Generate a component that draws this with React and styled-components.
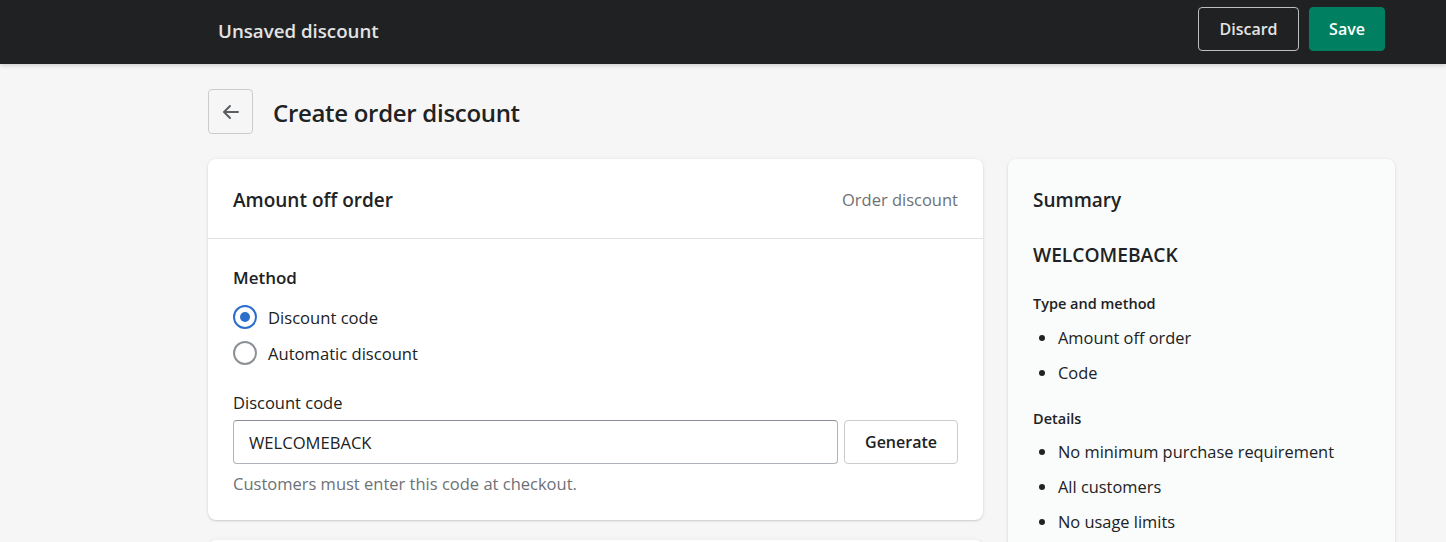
import styled, { createGlobalStyle } from "styled-components"

const GlobalStyle = createGlobalStyle`
  body {
    margin: 0;
    background: #f6f6f7;
    font-family: "Open Sans", "Noto Sans", sans-serif;
    color: #202223;
  }
  * {
    box-sizing: border-box;
  }
`

const TopBar = styled.header`
  height: 64px;
  background: #202123;
  display: flex;
  align-items: center;
  justify-content: space-between;
  padding: 0 61px 0 218px;
  box-shadow: 0 2px 4px rgba(0, 0, 0, 0.15);
`

const BarTitle = styled.div`
  color: #e3e3e3;
  font-size: 18.7px;
  font-weight: 600;
  margin-top: -4px;
`

const BarActions = styled.div`
  display: flex;
  gap: 10px;
  margin-top: -6px;
`

const BarButton = styled.button`
  width: ${(p) => p.$width}px;
  height: 44px;
  padding: 0;
  border-radius: 4px;
  font-family: inherit;
  font-size: 16px;
  font-weight: 600;
  border: 1px solid ${(p) => (p.$primary ? "#008060" : "#bbbfc3")};
  background: ${(p) => (p.$primary ? "#008060" : "transparent")};
  color: ${(p) => (p.$primary ? "#ffffff" : "#e3e3e3")};
`

const Page = styled.main`
  padding: 25px 51px 0 208px;
`

const TitleRow = styled.div`
  display: flex;
  align-items: center;
  gap: 20px;
  margin-bottom: 25px;
`

const BackButton = styled.button`
  width: 45px;
  height: 45px;
  border: 1px solid #c9cccf;
  border-radius: 4px;
  background: transparent;
  display: flex;
  align-items: center;
  justify-content: center;
  padding: 0;
`

const PageTitle = styled.h1`
  margin: 2px 0 0;
  font-size: 24px;
  font-weight: 600;
  letter-spacing: -0.3px;
`

const Layout = styled.div`
  display: grid;
  grid-template-columns: 775px 387px;
  gap: 25px;
  align-items: start;
`

const Column = styled.div`
  display: flex;
  flex-direction: column;
  gap: 20px;
`

const Card = styled.section`
  background: ${(p) => (p.$tint ? "#fafbfb" : "#ffffff")};
  border-radius: 8px;
  box-shadow: 0 0 5px rgba(23, 24, 24, 0.05), 0 1px 2px rgba(0, 0, 0, 0.15);
  min-height: ${(p) => p.$minHeight || 0}px;
`

const CardHeader = styled.div`
  height: 80px;
  padding: 2px 25px 0;
  display: flex;
  align-items: center;
  justify-content: space-between;
  border-bottom: 1px solid #e1e3e5;
`

const CardTitle = styled.h2`
  margin: 0;
  font-size: 19px;
  line-height: 26px;
  font-weight: 600;
`

const Muted = styled.span`
  color: #6d7175;
  font-size: 16.5px;
`

const CardBody = styled.div`
  padding: 28px 25px 25px;
`

const FieldLabel = styled.div`
  font-size: ${(p) => (p.$bold ? 17 : 16.5)}px;
  line-height: 22px;
  font-weight: ${(p) => (p.$bold ? 600 : 400)};
  margin-bottom: ${(p) => (p.$bold ? 16 : 6)}px;
`

const RadioGroup = styled.div`
  display: flex;
  flex-direction: column;
  gap: 12px;
  margin-bottom: 27px;
`

const RadioRow = styled.label`
  display: flex;
  align-items: center;
  gap: 11px;
  height: 24px;
  font-size: 16.6px;
`

const RadioDot = styled.span`
  width: 24px;
  height: 24px;
  border-radius: 50%;
  border: 2px solid ${(p) => (p.$checked ? "#2c6ecb" : "#8c9196")};
  display: flex;
  align-items: center;
  justify-content: center;
  &::after {
    content: "";
    width: 10px;
    height: 10px;
    border-radius: 50%;
    background: ${(p) => (p.$checked ? "#2c6ecb" : "transparent")};
  }
`

const InputRow = styled.div`
  display: flex;
  gap: 6px;
`

const TextInput = styled.div`
  flex: 1;
  height: 44px;
  border: 1px solid #aeb4b9;
  border-top-color: #898f94;
  border-radius: 4px;
  padding: 0 15px;
  display: flex;
  align-items: center;
  font-size: 16.6px;
  color: #202223;
`

const OutlineButton = styled.button`
  width: 114px;
  height: 44px;
  border: 1px solid #c9cccf;
  border-radius: 4px;
  background: #ffffff;
  font-family: inherit;
  font-size: 16px;
  font-weight: 600;
  color: #202223;
`

const HelpText = styled.div`
  margin-top: 9px;
  color: #6d7175;
  font-size: 16.5px;
  line-height: 22px;
`

const SummaryBody = styled.div`
  padding: 28px 25px 0;
`

const SummaryCode = styled.div`
  font-size: 19.2px;
  line-height: 26px;
  font-weight: 600;
  margin: 29px 0 26px;
`

const SectionLabel = styled.div`
  font-size: 14.5px;
  line-height: 20px;
  font-weight: 600;
`

const BulletList = styled.ul`
  margin: ${(p) => (p.$last ? "5px 0 20px" : "6px 0 19px")};
  padding-left: 25px;
  list-style: disc;
  li {
    font-size: 16.4px;
    line-height: 35px;
  }
`

const ArrowLeft = () => (
  <svg width="20" height="20" viewBox="0 0 20 20" fill="none">
    <path
      d="M17 10H3.5M9 4l-6 6 6 6"
      stroke="#5c5f62"
      strokeWidth="2"
      strokeLinecap="round"
      strokeLinejoin="round"
    />
  </svg>
)

const App = () => {
  return (
    <>
      <GlobalStyle />
      <TopBar>
        <BarTitle>Unsaved discount</BarTitle>
        <BarActions>
          <BarButton $width={101}>Discard</BarButton>
          <BarButton $width={76} $primary>
            Save
          </BarButton>
        </BarActions>
      </TopBar>
      <Page>
        <TitleRow>
          <BackButton aria-label="Back">
            <ArrowLeft />
          </BackButton>
          <PageTitle>Create order discount</PageTitle>
        </TitleRow>
        <Layout>
          <Column>
            <Card>
              <CardHeader>
                <CardTitle>Amount off order</CardTitle>
                <Muted>Order discount</Muted>
              </CardHeader>
              <CardBody>
                <FieldLabel $bold>Method</FieldLabel>
                <RadioGroup>
                  <RadioRow>
                    <RadioDot $checked />
                    Discount code
                  </RadioRow>
                  <RadioRow>
                    <RadioDot />
                    Automatic discount
                  </RadioRow>
                </RadioGroup>
                <FieldLabel>Discount code</FieldLabel>
                <InputRow>
                  <TextInput>WELCOMEBACK</TextInput>
                  <OutlineButton>Generate</OutlineButton>
                </InputRow>
                <HelpText>Customers must enter this code at checkout.</HelpText>
              </CardBody>
            </Card>
            <Card $minHeight={120} />
          </Column>
          <Card $tint>
            <SummaryBody>
              <CardTitle>Summary</CardTitle>
              <SummaryCode>WELCOMEBACK</SummaryCode>
              <SectionLabel>Type and method</SectionLabel>
              <BulletList>
                <li>Amount off order</li>
                <li>Code</li>
              </BulletList>
              <SectionLabel>Details</SectionLabel>
              <BulletList $last>
                <li>No minimum purchase requirement</li>
                <li>All customers</li>
                <li>No usage limits</li>
              </BulletList>
            </SummaryBody>
          </Card>
        </Layout>
      </Page>
    </>
  )
}

export default App
